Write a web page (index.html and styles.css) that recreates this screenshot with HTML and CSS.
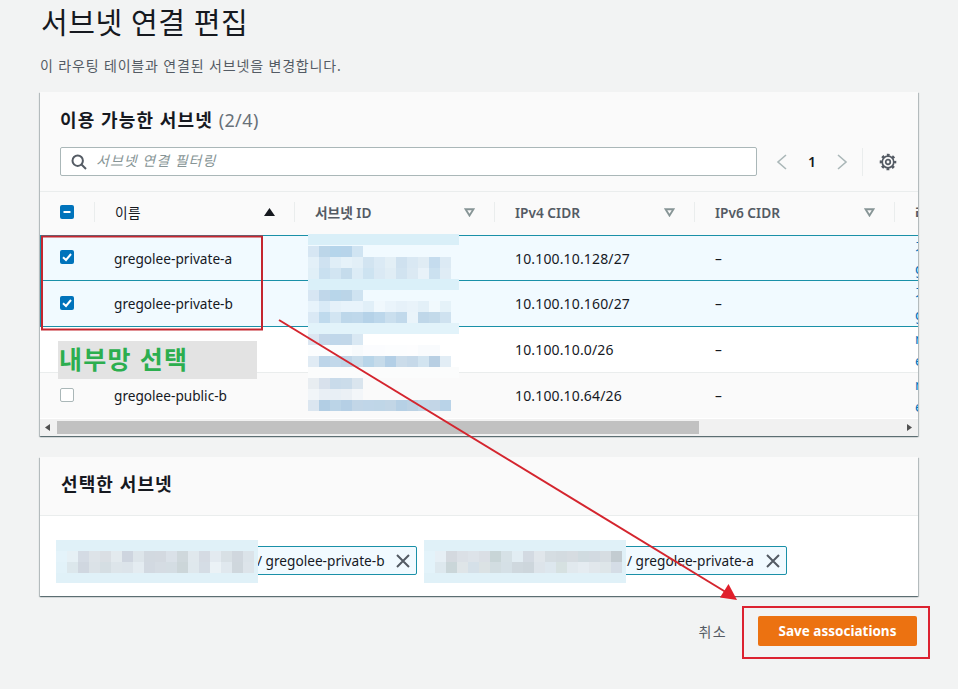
FILE: index.html
```html
<!DOCTYPE html>
<html lang="ko">
<head>
    <meta charset="utf-8">
    <title>서브넷 연결 편집</title>
    <link rel="stylesheet" href="styles.css">
</head>
<body>
    <div class="page">
        <h1>서브넷 연결 편집</h1>
        <p class="desc">이 라우팅 테이블과 연결된 서브넷을 변경합니다.</p>

        <section class="card">
            <div class="card-head">
                <h2>이용 가능한 서브넷 <span class="count">(2/4)</span></h2>
                <div class="toolbar">
                    <div class="search">
                        <svg class="search-icon" width="16" height="16" viewBox="0 0 16 16"><circle cx="6.700" cy="6.700" r="5.200"/><path d="M10.500 10.500 15 15"/></svg>
                        <span class="placeholder">서브넷 연결 필터링</span>
                    </div>
                    <div class="pager">
                        <svg class="chev" width="12" height="16" viewBox="0 0 12 16"><path d="M10 1 2 8l8 7"/></svg>
                        <span class="page-no">1</span>
                        <svg class="chev" width="12" height="16" viewBox="0 0 12 16"><path d="M2 1l8 7-8 7"/></svg>
                    </div>
                    <div class="prefs">
                        <svg class="gear" width="18" height="18" viewBox="0 0 18 18"><circle cx="9" cy="9" r="2.300"/><circle cx="9" cy="9" r="5.800"/><circle class="teeth" cx="9" cy="9" r="7" stroke-dasharray="2.700 2.800" stroke-dashoffset="1.350"/></svg>
                    </div>
                </div>
            </div>

            <div class="table-wrap">
                <table>
                    <thead>
                        <tr>
                            <th class="col-check"><span class="th-in"><span class="check on"><svg width="14" height="14" viewBox="0 0 14 14"><path class="dash" d="M3.500 7h7"/></svg></span></span></th>
                            <th><span class="th-in sorted">이름<svg class="sort" width="11" height="8" viewBox="0 0 11 8"><path d="M5.500 0 11 8H0z"/></svg></span></th>
                            <th><span class="th-in">서브넷 ID<svg class="sort" width="11" height="9" viewBox="0 0 11 9"><path class="open" d="M1.500 1.200h8L5.500 7.500z"/></svg></span></th>
                            <th><span class="th-in">IPv4 CIDR<svg class="sort" width="11" height="9" viewBox="0 0 11 9"><path class="open" d="M1.500 1.200h8L5.500 7.500z"/></svg></span></th>
                            <th><span class="th-in">IPv6 CIDR<svg class="sort" width="11" height="9" viewBox="0 0 11 9"><path class="open" d="M1.500 1.200h8L5.500 7.500z"/></svg></span></th>
                            <th><span class="th-in">라</span></th>
                        </tr>
                    </thead>
                    <tbody>
                        <tr class="selected first">
                            <td class="col-check"><span class="check on"><svg width="14" height="14" viewBox="0 0 14 14"><path class="tick" d="M3 7.300 6 10l5-6"/></svg></span></td>
                            <td>gregolee-private-a</td>
                            <td></td>
                            <td class="ip">10.100.10.128/27</td>
                            <td>–</td>
                            <td class="links"><a>기</a><a>g</a></td>
                        </tr>
                        <tr class="selected">
                            <td class="col-check"><span class="check on"><svg width="14" height="14" viewBox="0 0 14 14"><path class="tick" d="M3 7.300 6 10l5-6"/></svg></span></td>
                            <td>gregolee-private-b</td>
                            <td></td>
                            <td class="ip">10.100.10.160/27</td>
                            <td>–</td>
                            <td class="links"><a>기</a><a>g</a></td>
                        </tr>
                        <tr class="after-selected">
                            <td class="col-check"></td>
                            <td></td>
                            <td></td>
                            <td class="ip">10.100.10.0/26</td>
                            <td>–</td>
                            <td class="links"><a>n</a><a>e</a></td>
                        </tr>
                        <tr class="striped">
                            <td class="col-check"><span class="check"></span></td>
                            <td>gregolee-public-b</td>
                            <td></td>
                            <td class="ip">10.100.10.64/26</td>
                            <td>–</td>
                            <td class="links"><a>n</a><a>e</a></td>
                        </tr>
                    </tbody>
                </table>

                <!-- masked subnet ids -->
                <svg class="mask-ids" width="151" height="178" viewBox="0 0 151 178">
                    <rect class="band" y="0" fill="#d9eff8"/>
                    <rect x="0" y="12" fill="#d6e6f3"/><rect x="11" y="12" fill="#bcd6e9"/><rect x="22" y="12" fill="#b5d5eb"/><rect x="33" y="12" fill="#b7d4ea"/><rect x="44" y="12" fill="#d0e4f2"/>
                    <rect x="0" y="23" fill="#e3f0f8"/><rect x="11" y="23" fill="#cfe2f1"/><rect x="22" y="23" fill="#e0eef7"/><rect x="33" y="23" fill="#e6f2f9"/><rect x="44" y="23" fill="#e2eff7"/><rect x="55" y="23" fill="#d2e4f1"/><rect x="66" y="23" fill="#dbeaf5"/><rect x="77" y="23" fill="#e3eff6"/><rect x="88" y="23" fill="#cfe1ef"/><rect x="99" y="23" fill="#d9e8f3"/><rect x="110" y="23" fill="#e0ecf4"/><rect x="121" y="23" fill="#c5dcee"/><rect x="132" y="23" fill="#dceaf4"/>
                    <rect x="0" y="34" fill="#e0eff7"/><rect x="11" y="34" fill="#c9e0f0"/><rect x="22" y="34" fill="#d2e5f2"/><rect x="33" y="34" fill="#c5dcec"/><rect x="44" y="34" fill="#dcecf6"/><rect x="55" y="34" fill="#cde3f1"/><rect x="66" y="34" fill="#dae9f4"/><rect x="77" y="34" fill="#e0edf5"/><rect x="88" y="34" fill="#d1e3f0"/><rect x="99" y="34" fill="#dbe9f3"/><rect x="110" y="34" fill="#e8f2f9"/><rect x="121" y="34" fill="#cbe1f0"/><rect x="132" y="34" fill="#dfecf5"/>
                    <rect class="band" y="45" fill="#daf0f9"/>
                    <rect x="0" y="56" fill="#d7e6f3"/><rect x="11" y="56" fill="#c0d7ea"/><rect x="22" y="56" fill="#b8d6ea"/><rect x="33" y="56" fill="#bbd5e8"/><rect x="44" y="56" fill="#cfe3f1"/>
                    <rect x="0" y="67" fill="#e7f3fb"/><rect x="11" y="67" fill="#d9eaf7"/><rect x="22" y="67" fill="#e5f1f9"/><rect x="33" y="67" fill="#e8f3fb"/><rect x="44" y="67" fill="#e8f3fb"/><rect x="55" y="67" fill="#e1eff8"/><rect x="66" y="67" fill="#f0f8fd"/><rect x="77" y="67" fill="#eaf4fb"/><rect x="88" y="67" fill="#e6f1f9"/><rect x="99" y="67" fill="#e9f3fa"/><rect x="110" y="67" fill="#e3f0f8"/><rect x="121" y="67" fill="#f1f9fd"/><rect x="132" y="67" fill="#e5f2f9"/>
                    <rect x="0" y="78" fill="#dae9f5"/><rect x="11" y="78" fill="#bfdaed"/><rect x="22" y="78" fill="#d2e5f2"/><rect x="33" y="78" fill="#bdd7ea"/><rect x="44" y="78" fill="#bfd8eb"/><rect x="55" y="78" fill="#b5d2e8"/><rect x="66" y="78" fill="#bcd7eb"/><rect x="77" y="78" fill="#cadfee"/><rect x="88" y="78" fill="#c1d9eb"/><rect x="99" y="78" fill="#eaf4fa"/><rect x="110" y="78" fill="#bfd7e9"/><rect x="121" y="78" fill="#c3daea"/><rect x="132" y="78" fill="#cfe2f0"/>
                    <rect class="band" y="89" fill="#e2f3fa"/>
                    <rect x="0" y="100" fill="#dbe6f1"/><rect x="11" y="100" fill="#c4d7e9"/><rect x="22" y="100" fill="#c0d7ea"/><rect x="33" y="100" fill="#c1d7e9"/><rect x="44" y="100" fill="#d9e8f3"/>
                    <rect x="0" y="111" fill="#fbfdfe"/><rect x="11" y="111" fill="#fbfdfe"/><rect x="22" y="111" fill="#fbfdfe"/><rect x="33" y="111" fill="#fbfdfe"/><rect x="44" y="111" fill="#f7fafc"/><rect x="55" y="111" fill="#fbfcfe"/><rect x="66" y="111" fill="#fbfcfe"/><rect x="77" y="111" fill="#fcfdfe"/><rect x="88" y="111" fill="#fcfdfe"/><rect x="99" y="111" fill="#fdfdfe"/><rect x="110" y="111" fill="#f9fbfd"/><rect x="121" y="111" fill="#f9fbfd"/>
                    <rect x="0" y="122" fill="#e0ebf4"/><rect x="11" y="122" fill="#bdd5e9"/><rect x="22" y="122" fill="#c2d8ea"/><rect x="33" y="122" fill="#bfd5e7"/><rect x="44" y="122" fill="#c9ddeb"/><rect x="55" y="122" fill="#b8d5e9"/><rect x="66" y="122" fill="#c6dbea"/><rect x="77" y="122" fill="#b3cfe6"/><rect x="88" y="122" fill="#cbdcea"/><rect x="99" y="122" fill="#c6d9e9"/><rect x="110" y="122" fill="#d2e4f0"/><rect x="121" y="122" fill="#b8cfe3"/><rect x="132" y="122" fill="#e2edf5"/>
                    <rect class="band" y="133" fill="#fbfcfc"/>
                    <rect x="0" y="144" fill="#e8edf1"/><rect x="11" y="144" fill="#d8e1ec"/><rect x="22" y="144" fill="#c9dbea"/><rect x="33" y="144" fill="#cbdcea"/><rect x="44" y="144" fill="#dae5ee"/>
                    <rect x="0" y="155" fill="#f1f5f8"/><rect x="11" y="155" fill="#e9eff5"/><rect x="22" y="155" fill="#e8eff5"/><rect x="33" y="155" fill="#ebf0f5"/><rect x="44" y="155" fill="#f3f6f9"/>
                    <rect x="0" y="166" fill="#dbe6f0"/><rect x="11" y="166" fill="#b2cee4"/><rect x="22" y="166" fill="#bbd4e7"/><rect x="33" y="166" fill="#b5cfe5"/><rect x="44" y="166" fill="#c2d6e7"/><rect x="55" y="166" fill="#c0d6e8"/><rect x="66" y="166" fill="#bfd6e7"/><rect x="77" y="166" fill="#c2d6e6"/><rect x="88" y="166" fill="#b6d0e5"/><rect x="99" y="166" fill="#bcd2e4"/><rect x="110" y="166" fill="#c3d8e8"/><rect x="121" y="166" fill="#c3d6e7"/><rect x="132" y="166" fill="#b9d3e8"/>
                </svg>
            </div>

            <div class="hscroll">
                <svg width="5" height="7" viewBox="0 0 5 7"><path d="M5 0v7L0 3.500z"/></svg>
                <div class="hscroll-track"><div class="hscroll-thumb"></div></div>
                <svg width="5" height="7" viewBox="0 0 5 7"><path d="M0 0v7l5-3.500z"/></svg>
            </div>
        </section>

        <section class="card chosen">
            <div class="chosen-head"><h2>선택한 서브넷</h2></div>
            <div class="chips">
                <div class="chip">
                    <span class="chip-id">
                        <svg class="mask-chip" width="202" height="43" viewBox="0 0 202 43">
                            <rect class="base" fill="#e0f1f8"/>
                            <rect x="0" y="11" fill="#e4f3fa"/><rect x="11" y="11" fill="#e6f0f5"/><rect x="22" y="11" fill="#d4dbe4"/><rect x="33" y="11" fill="#dde3e8"/><rect x="44" y="11" fill="#dadfe4"/><rect x="55" y="11" fill="#e3eaee"/><rect x="66" y="11" fill="#ced5df"/><rect x="77" y="11" fill="#dde5ea"/><rect x="88" y="11" fill="#d2d9e0"/><rect x="99" y="11" fill="#d3d9e0"/><rect x="110" y="11" fill="#dae1e8"/><rect x="121" y="11" fill="#cfd8dc"/><rect x="132" y="11" fill="#e0e8ed"/><rect x="143" y="11" fill="#d5dbe3"/><rect x="154" y="11" fill="#e3eaf0"/><rect x="165" y="11" fill="#d8e0e5"/><rect x="176" y="11" fill="#d0d7de"/><rect x="187" y="11" fill="#dbe3e9"/>
                            <rect x="0" y="22" fill="#e2f2f9"/><rect x="11" y="22" fill="#dce7ec"/><rect x="22" y="22" fill="#d0d7e0"/><rect x="33" y="22" fill="#dbe2e7"/><rect x="44" y="22" fill="#d5dee3"/><rect x="55" y="22" fill="#dde5ea"/><rect x="66" y="22" fill="#dce4ea"/><rect x="77" y="22" fill="#e4ecf1"/><rect x="88" y="22" fill="#d2d9e1"/><rect x="99" y="22" fill="#d5dce3"/><rect x="110" y="22" fill="#d4dde3"/><rect x="121" y="22" fill="#ccd6d9"/><rect x="132" y="22" fill="#dfe8ed"/><rect x="143" y="22" fill="#d5dde5"/><rect x="154" y="22" fill="#ebf2f6"/><rect x="165" y="22" fill="#e0e8ee"/><rect x="176" y="22" fill="#cfd7dd"/><rect x="187" y="22" fill="#dde4ea"/>
                        </svg>
                    </span>
                    <span class="chip-name">/ gregolee-private-b</span>
                    <svg class="chip-x" width="14" height="14" viewBox="0 0 14 14"><path d="M1 1l12 12M13 1 1 13"/></svg>
                </div>
                <div class="chip">
                    <span class="chip-id">
                        <svg class="mask-chip" width="202" height="43" viewBox="0 0 202 43">
                            <rect class="base" fill="#e0f1f8"/>
                            <rect x="0" y="11" fill="#e3f3fa"/><rect x="11" y="11" fill="#e6eff5"/><rect x="22" y="11" fill="#d4d9df"/><rect x="33" y="11" fill="#dbe0e6"/><rect x="44" y="11" fill="#dde3e9"/><rect x="55" y="11" fill="#dadfe5"/><rect x="66" y="11" fill="#c8d5d7"/><rect x="77" y="11" fill="#d6e1e6"/><rect x="88" y="11" fill="#e2edf3"/><rect x="99" y="11" fill="#d3dae2"/><rect x="110" y="11" fill="#e0e6eb"/><rect x="121" y="11" fill="#d5dde2"/><rect x="132" y="11" fill="#d3dbe0"/><rect x="143" y="11" fill="#d6dce1"/><rect x="154" y="11" fill="#d0dbe0"/><rect x="165" y="11" fill="#d2dae1"/><rect x="176" y="11" fill="#d6dde2"/><rect x="187" y="11" fill="#c3ccd1"/>
                            <rect x="0" y="22" fill="#e3f3fa"/><rect x="11" y="22" fill="#dde8ee"/><rect x="22" y="22" fill="#cad6d9"/><rect x="33" y="22" fill="#dfe5e8"/><rect x="44" y="22" fill="#d5e0e8"/><rect x="55" y="22" fill="#dbe2e4"/><rect x="66" y="22" fill="#d2dde1"/><rect x="77" y="22" fill="#d5e0e6"/><rect x="88" y="22" fill="#cfd8de"/><rect x="99" y="22" fill="#cdd6dc"/><rect x="110" y="22" fill="#dde4ea"/><rect x="121" y="22" fill="#dde7ee"/><rect x="132" y="22" fill="#d6e1e1"/><rect x="143" y="22" fill="#e1e9ee"/><rect x="154" y="22" fill="#e5ecf1"/><rect x="165" y="22" fill="#e1e7ec"/><rect x="176" y="22" fill="#dee6e9"/><rect x="187" y="22" fill="#d5dde6"/>
                        </svg>
                    </span>
                    <span class="chip-name">/ gregolee-private-a</span>
                    <svg class="chip-x" width="14" height="14" viewBox="0 0 14 14"><path d="M1 1l12 12M13 1 1 13"/></svg>
                </div>
            </div>
        </section>

        <div class="actions">
            <a class="cancel">취소</a>
            <button class="save">Save associations</button>
        </div>
    </div>

    <!-- screenshot markup drawn on top -->
    <div class="note-label">내부망 선택</div>
    <svg class="notes" width="958" height="689" viewBox="0 0 958 689">
        <rect x="42" y="236.500" width="220" height="93" class="box-dark"/>
        <rect x="743" y="607" width="186" height="51" class="box"/>
        <path d="M279 320 729 594" class="line"/>
        <path d="M737 600 720 597.500 728.500 584z" class="head"/>
    </svg>
</body>
</html>
```

FILE: styles.css
```css
body {
    font-family: "Noto Sans", "Noto Sans CJK KR", sans-serif;
    margin: 0;
    background-color: #f2f3f3;
    color: #16191f;
    font-size: 14px;
    position: relative;
    height: 689px;
    overflow: hidden;
}
.page {
    padding: 0 40px;
}
h1 {
    font-size: 29px;
    font-weight: 400;
    letter-spacing: 0.6px;
    line-height: 44px;
    margin: 1px 0 0 1px;
}
.desc {
    color: #545b64;
    font-size: 14px;
    letter-spacing: 0.85px;
    line-height: 20px;
    margin: 11px 0 16px;
}
.card {
    background-color: #fff;
    box-shadow: 0 1px 1px rgba(0, 28, 36, 0.4), 1px 1px 1px rgba(0, 28, 36, 0.2), -1px 1px 1px rgba(0, 28, 36, 0.2);
}
.card-head {
    background-color: #fafafa;
    border-bottom: 1px solid #eaeded;
    height: 99px;
    padding: 0 20px;
}
h2 {
    font-size: 18px;
    font-weight: 700;
    letter-spacing: 1.1px;
    line-height: 24px;
    margin: 0;
}
.card-head h2 {
    padding-top: 16px;
}
.count {
    color: #687078;
    font-weight: 400;
    letter-spacing: 0.4px;
}
.toolbar {
    display: flex;
    align-items: center;
    margin-top: 15px;
}
.search {
    width: 697px;
    height: 29px;
    box-sizing: border-box;
    background-color: #fff;
    border: 1px solid #aab7b8;
    border-radius: 2px;
    display: flex;
    align-items: center;
    padding-left: 10px;
    gap: 9px;
}
.search-icon {
    fill: none;
    stroke: #545b64;
    stroke-width: 2;
}
.placeholder {
    color: #879596;
    font-style: italic;
    font-size: 14px;
    letter-spacing: 1px;
    padding-bottom: 3px;
}
.pager {
    display: flex;
    align-items: center;
    margin-left: 19px;
    gap: 20px;
    width: 86px;
}
.chev {
    fill: none;
    stroke: #aab7b8;
    stroke-width: 1.6;
}
.page-no {
    font-weight: 600;
    font-size: 14px;
}
.prefs {
    height: 28px;
    border-left: 1px solid #eaeded;
    padding-left: 16px;
    display: flex;
    align-items: center;
}
.gear {
    fill: none;
    stroke: #545b64;
    stroke-width: 1.7;
}
.gear .teeth {
    stroke-width: 2.6;
}
.table-wrap {
    position: relative;
    overflow: hidden;
    height: 227px;
}
table {
    border-collapse: separate;
    border-spacing: 0;
    table-layout: fixed;
    width: 1054px;
}
th {
    width: 200px;
    height: 43px;
    box-sizing: border-box;
    padding: 10px 0 0;
    vertical-align: top;
    background-color: #fafafa;
    color: #545b64;
    font-weight: 600;
    font-size: 13.7px;
    text-align: left;
}
th.col-check, td.col-check {
    width: 54px;
}
.th-in {
    display: flex;
    align-items: center;
    justify-content: space-between;
    height: 20px;
    border-left: 1px solid #eaeded;
    padding: 0 19px 0 20px;
}
th.col-check .th-in {
    border-left: 0;
    padding: 0 0 0 20px;
}
.sorted {
    color: #16191f;
    font-weight: 400;
    letter-spacing: 0.4px;
}
.sort path {
    fill: #16191f;
}
.sort path.open {
    fill: none;
    stroke: #879596;
    stroke-width: 1.9;
}
td {
    height: 46px;
    box-sizing: border-box;
    padding: 0 0 0 21px;
    border-top: 1px solid #eaeded;
    font-size: 13.65px;
    color: #16191f;
    overflow: hidden;
    white-space: nowrap;
    background-color: #fff;
}
td.col-check {
    padding-left: 20px;
}
td:nth-child(2) {
    padding-left: 20px;
}
td.ip {
    font-size: 14px;
    letter-spacing: 0.15px;
}
tr.first td {
    height: 45px;
}
tr.selected td {
    background-color: #f1faff;
    border-top-color: #1a90a8;
}
tr.selected td.col-check {
    border-left: 1px solid #1a90a8;
    padding-left: 19px;
}
tr.after-selected td {
    border-top-color: #1a90a8;
}
tr.striped td {
    background-color: #fafafa;
}
.links a {
    display: block;
    color: #0073bb;
    font-size: 14px;
    line-height: 22px;
}
.check {
    display: block;
    width: 14px;
    height: 14px;
    box-sizing: border-box;
    border: 1px solid #aab7b8;
    border-radius: 2px;
    background-color: #fff;
}
td .check {
    margin-top: -2px;
}
.check.on {
    border: 0;
    background-color: #0073bb;
}
.check svg {
    display: block;
    fill: none;
    stroke: #fff;
    stroke-width: 2;
}
.mask-ids {
    position: absolute;
    left: 268px;
    top: 42px;
    shape-rendering: crispEdges;
}
.mask-ids rect, .mask-chip rect {
    width: 11px;
    height: 11px;
}
.mask-ids rect.band {
    width: 151px;
}
.mask-chip rect.base {
    width: 202px;
    height: 43px;
}
.hscroll {
    height: 17px;
    background-color: #f1f1f1;
    display: flex;
    align-items: center;
    padding: 0 6px 0 5px;
    gap: 7px;
}
.hscroll svg {
    fill: #505050;
    flex: none;
}
.hscroll-track {
    flex: 1;
}
.hscroll-thumb {
    width: 642px;
    height: 13px;
    background-color: #c1c1c1;
}
.chosen {
    margin-top: 21px;
    height: 139px;
}
.chosen-head {
    background-color: #fafafa;
    border-bottom: 1px solid #eaeded;
    height: 59px;
    box-sizing: border-box;
    padding: 15px 21px 0;
}
.chips {
    display: flex;
    gap: 14px;
    padding: 30px 0 0 21px;
}
.chip {
    width: 356px;
    height: 29px;
    box-sizing: border-box;
    background-color: #f1faff;
    border: 1px solid #1a90a8;
    border-radius: 2px;
    display: flex;
    align-items: center;
    font-size: 13.65px;
}
.chip-id {
    position: relative;
    width: 194px;
    align-self: stretch;
}
.mask-chip {
    position: absolute;
    left: -6px;
    top: -7px;
    shape-rendering: crispEdges;
}
.chip + .chip .mask-chip {
    left: -8px;
}
.chip-name {
    white-space: nowrap;
    padding-left: 1px;
}
.chip-x {
    fill: none;
    stroke: #545b64;
    stroke-width: 2;
    margin-left: auto;
    margin-right: 6px;
}
.actions {
    display: flex;
    justify-content: flex-end;
    align-items: center;
    margin-top: 20px;
    padding-right: 1px;
    gap: 31px;
}
.cancel {
    color: #545b64;
    font-size: 14px;
    letter-spacing: 1.4px;
}
.save {
    width: 159px;
    height: 30px;
    font-family: inherit;
    font-size: 13.5px;
    font-weight: 700;
    color: #fff;
    background-color: #ec7211;
    border: none;
    border-radius: 2px;
    padding: 0;
}
.note-label {
    position: absolute;
    left: 58px;
    top: 341px;
    width: 199px;
    height: 38px;
    background-color: #e3e3e3;
    color: #2cae4f;
    font-size: 25px;
    font-weight: 700;
    letter-spacing: 1.3px;
    line-height: 36px;
    padding-left: 1px;
    box-sizing: border-box;
    white-space: nowrap;
}
.notes {
    position: absolute;
    left: 0;
    top: 0;
    pointer-events: none;
    fill: none;
}
.box {
    stroke: #dc2230;
    stroke-width: 2;
}
.box-dark {
    stroke: #c4262f;
    stroke-width: 2;
}
.line {
    stroke: #d4252e;
    stroke-width: 2;
}
.head {
    fill: #e01f2b;
}
```
